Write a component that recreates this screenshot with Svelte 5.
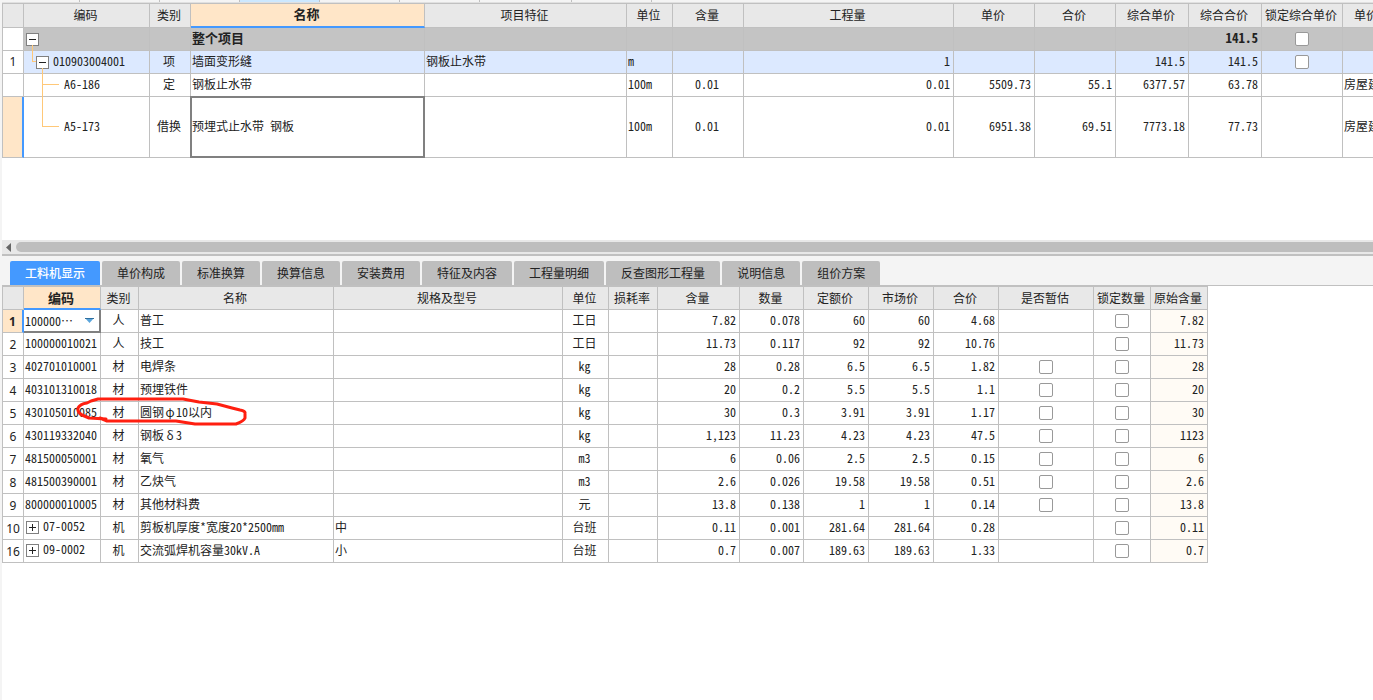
<script lang="ts">
  const topCols = [21, 126, 41, 234, 202, 46, 71, 210, 81, 81, 73, 73, 81, 96];
  const topHeads = ['', '编码', '类别', '名称', '项目特征', '单位', '含量', '工程量', '单价', '合价', '综合单价', '综合合价', '锁定综合单价', '单价'];
  const topRows = [
    { kind: 'group', no: '', code: '', level: 0, type: '', name: '整个项目', feat: '', unit: '', content: '', qty: '', nums: ['', '', '', '141.5'], lock: true, file: '' },
    { kind: 'item', no: '1', code: '010903004001', level: 1, type: '项', name: '墙面变形缝', feat: '钢板止水带', unit: 'm', content: '', qty: '1', nums: ['', '', '141.5', '141.5'], lock: true, file: '' },
    { kind: 'quota', no: '', code: 'A6-186', level: 2, type: '定', name: '钢板止水带', feat: '', unit: '100m', content: '0.01', qty: '0.01', nums: ['5509.73', '55.1', '6377.57', '63.78'], lock: false, file: '房屋建' },
    { kind: 'current', no: '', code: 'A5-173', level: 2, type: '借换', name: '预埋式止水带 钢板', feat: '', unit: '100m', content: '0.01', qty: '0.01', nums: ['6951.38', '69.51', '7773.18', '77.73'], lock: false, file: '房屋建' }
  ];

  const tabs = ['工料机显示', '单价构成', '标准换算', '换算信息', '安装费用', '特征及内容', '工程量明细', '反查图形工程量', '说明信息', '组价方案'];
  let active = $state(0);

  const subCols = [21, 77, 38, 195, 229, 46, 49, 82, 64, 65, 65, 65, 95, 57, 57];
  const subHeads = ['', '编码', '类别', '名称', '规格及型号', '单位', '损耗率', '含量', '数量', '定额价', '市场价', '合价', '是否暂估', '锁定数量', '原始含量'];
  const subRows = [
    { no: '1', code: '100000…', type: '人', name: '普工', spec: '', unit: '工日', nums: ['7.82', '0.078', '60', '60', '4.68'], est: false, orig: '7.82' },
    { no: '2', code: '100000010021', type: '人', name: '技工', spec: '', unit: '工日', nums: ['11.73', '0.117', '92', '92', '10.76'], est: false, orig: '11.73' },
    { no: '3', code: '402701010001', type: '材', name: '电焊条', spec: '', unit: 'kg', nums: ['28', '0.28', '6.5', '6.5', '1.82'], est: true, orig: '28' },
    { no: '4', code: '403101310018', type: '材', name: '预埋铁件', spec: '', unit: 'kg', nums: ['20', '0.2', '5.5', '5.5', '1.1'], est: true, orig: '20' },
    { no: '5', code: '430105010085', type: '材', name: '圆钢φ10以内', spec: '', unit: 'kg', nums: ['30', '0.3', '3.91', '3.91', '1.17'], est: true, orig: '30' },
    { no: '6', code: '430119332040', type: '材', name: '钢板δ3', spec: '', unit: 'kg', nums: ['1,123', '11.23', '4.23', '4.23', '47.5'], est: true, orig: '1123' },
    { no: '7', code: '481500050001', type: '材', name: '氧气', spec: '', unit: 'm3', nums: ['6', '0.06', '2.5', '2.5', '0.15'], est: true, orig: '6' },
    { no: '8', code: '481500390001', type: '材', name: '乙炔气', spec: '', unit: 'm3', nums: ['2.6', '0.026', '19.58', '19.58', '0.51'], est: true, orig: '2.6' },
    { no: '9', code: '800000010005', type: '材', name: '其他材料费', spec: '', unit: '元', nums: ['13.8', '0.138', '1', '1', '0.14'], est: true, orig: '13.8' },
    { no: '10', code: '07-0052', type: '机', name: '剪板机厚度*宽度20*2500mm', spec: '中', unit: '台班', nums: ['0.11', '0.001', '281.64', '281.64', '0.28'], est: false, orig: '0.11' },
    { no: '16', code: '09-0002', type: '机', name: '交流弧焊机容量30kV.A', spec: '小', unit: '台班', nums: ['0.7', '0.007', '189.63', '189.63', '1.33'], est: false, orig: '0.7' }
  ];
  const sum = (list: number[]) => list.reduce((a, b) => a + b, 1);
  // Greek symbols take a full character cell in material names
  const pieces = (s: string) => s.split(/([φδ])/);
</script>

{#snippet toggle(open: boolean)}
  <button class="toggle" aria-label={open ? '−' : '+'}>
    <svg viewBox="0 0 13 13" width="13" height="13" shape-rendering="crispEdges">
      <rect x="0.5" y="0.5" width="12" height="12" fill="#fff" stroke="#808080" />
      <path d={open ? 'M3 6.5H10' : 'M3 6.5H10M6.5 3V10'} stroke="#222" fill="none" />
    </svg>
  </button>
{/snippet}

<div class="app">
  <div class="strip">
    {#each [78, 80, 80, 80, 80, 80, 92, 80] as w, i}
      <span class:lit={i === 3} style="width:{w}px"></span>
    {/each}
  </div>

  <section class="upper">
    <table style="width:{sum(topCols)}px">
      <colgroup>{#each topCols as w}<col style="width:{w}px" />{/each}</colgroup>
      <thead>
        <tr>{#each topHeads as h, i}<th class:picked={i === 3} class:cut={i === 13}>{h}</th>{/each}</tr>
      </thead>
      <tbody>
        {#each topRows as r, i}
          <tr class={r.kind}>
            <td class="no">{r.no}</td>
            <td class="code">
              <div class="tree l{r.level}">
                {#if r.level < 2}{@render toggle(true)}{/if}
                <span>{r.code}</span>
              </div>
              {#if i === 0}
                <svg class="branches" width="40" height="104" shape-rendering="crispEdges">
                  <path d="M8.5 17V33.5H12M18.5 40V98.5H35M18.5 56.5H35" fill="none" stroke="#ffc878" />
                </svg>
              {/if}
            </td>
            <td class="mid">{r.type}</td>
            <td class="name">{r.name}</td>
            <td>{r.feat}</td>
            <td>{r.unit}</td>
            <td class="mid">{r.content}</td>
            <td class="num">{r.qty}</td>
            {#each r.nums as n}<td class="num">{n}</td>{/each}
            <td class="check">{#if r.lock}<input type="checkbox" aria-label="锁定综合单价" />{/if}</td>
            <td>{r.file}</td>
          </tr>
        {/each}
      </tbody>
    </table>
  </section>

  <div class="scroll">
    <svg width="14" height="12" viewBox="0 0 14 12"><path d="M9 2V11L4 6.5Z" fill="#666" /></svg>
    <div class="thumb"></div>
  </div>

  <nav class="tabs">
    {#each tabs as t, i}
      <button class:active={active === i} onclick={() => (active = i)}>{t}</button>
    {/each}
  </nav>

  <section class="lower">
    <table style="width:{sum(subCols)}px">
      <colgroup>{#each subCols as w}<col style="width:{w}px" />{/each}</colgroup>
      <thead>
        <tr>{#each subHeads as h, i}<th class:picked={i === 1}>{h}</th>{/each}</tr>
      </thead>
      <tbody>
        {#each subRows as r, i}
          <tr class:editing={i === 0}>
            <td class="no">{r.no}</td>
            <td class="code">
              {#if i === 0}
                <div class="combo">
                  <select aria-label="编码"><option>{r.code}</option></select>
                  <svg width="9" height="5" viewBox="0 0 9 5"><path d="M0 0H9L4.5 5Z" fill="#5aa5dc" /><path d="M0 0.5H9" stroke="#2f6f9f" /></svg>
                </div>
              {:else if r.type === '机'}
                <div class="tree">{@render toggle(false)}<span>{r.code}</span></div>
              {:else}{r.code}{/if}
            </td>
            <td class="mid">{r.type}</td>
            <td>{#each pieces(r.name) as p, k}{#if k % 2}<span class="greek">{p}</span>{:else}{p}{/if}{/each}</td>
            <td>{r.spec}</td>
            <td class="mid">{r.unit}</td>
            <td></td>
            {#each r.nums as n}<td class="num">{n}</td>{/each}
            <td class="check">{#if r.est}<input type="checkbox" aria-label="是否暂估" />{/if}</td>
            <td class="check"><input type="checkbox" aria-label="锁定数量" /></td>
            <td class="num orig">{r.orig}</td>
          </tr>
        {/each}
      </tbody>
    </table>
    <svg class="mark" width="180" height="34" viewBox="0 0 180 34">
      <path d="M31 23L14 22L7 19Q2 16 3 12Q5 8 12 7L16 5L23 3H108L124 6L142 8L157 12L165 14Q171 15 170 18V22Q169 25 161 28H120L101 25H32L25 22" fill="none" stroke="#ff1f10" stroke-width="3" stroke-linejoin="round" stroke-linecap="round" />
    </svg>
  </section>
</div>

<style>
  :global(body) { background: #fff; }
  .app {
    min-height: 100vh;
    box-sizing: border-box;
    border-left: 2px solid #f4f4f4;
    overflow: hidden;
    color: #222;
    font: 12px/16px "Noto Sans Mono CJK SC", "Noto Sans CJK SC", sans-serif;
  }
  .strip { display: flex; height: 2px; background: #f4f4f4; border-bottom: 1px solid #e0e0e0; }
  .strip span { box-sizing: border-box; border-right: 1px solid #c0c0c0; }
  .strip .lit { background: #cce8ff; }

  .upper { min-height: 237px; overflow: hidden; }
  table { table-layout: fixed; border-collapse: separate; border-spacing: 0; border-left: 1px solid #c0c0c0; border-top: 1px solid #c0c0c0; }
  th, td {
    box-sizing: border-box;
    height: 23px;
    padding: 0 3px 2px 1px;
    border-right: 1px solid #c0c0c0;
    border-bottom: 1px solid #c0c0c0;
    white-space: nowrap;
    overflow: hidden;
    text-align: left;
    vertical-align: middle;
  }
  th { background: #e8e8e8; font-weight: 400; text-align: center; padding: 0 2px 0 0; }
  .upper th { height: 24px; padding-bottom: 2px; }
  th.cut { text-align: left; padding-left: 11px; }
  th.picked { background: #ffe6c8; font-size: 13px; font-weight: 700; border-bottom: 2px solid #4499ff; }
  .mid { text-align: center; }
  .num { text-align: right; }
  .check { padding: 0; }
  .no { text-align: center; padding: 0; font-family: "Noto Sans", sans-serif; }
  .group td:not(.no) { background: #c4c4c4; font-size: 13px; font-weight: 700; }
  .item td:not(.no) { background: #dce9ff; }
  .current td { height: 61px; }
  .current .no { background: #ffe6c8; border-right: 2px solid #4499ff; }
  .current .name { position: relative; overflow: visible; }
  .current .name::after { content: ""; position: absolute; inset: -1px -1px -1px -1px; border: 2px solid #808080; }
  .code { padding: 0 2px 0 2px; }
  .upper .code { position: relative; overflow: visible; }
  .branches { position: absolute; left: 0; top: 0; z-index: 1; }
  .tree { display: flex; align-items: center; gap: 4px; }
  .tree span { padding-bottom: 2px; }
  .l1 { padding-left: 10px; }
  .l2 { padding-left: 38px; }
  .toggle { display: block; width: 13px; height: 13px; padding: 0; border: 0; background: none; }
  .toggle svg { display: block; }
  .greek { display: inline-block; width: 12px; text-align: center; }
  input { appearance: none; display: block; box-sizing: border-box; width: 14px; height: 14px; margin: 0 auto; border: 1px solid #999; border-radius: 2px; background: #fff; }

  .scroll { display: flex; box-sizing: border-box; height: 16px; padding: 2px 0; background: #e8e8e8; border-bottom: 2px solid #c0c0c0; }
  .scroll svg { margin-top: -1px; }
  .thumb { flex: 1; height: 10px; background: #bebebe; border-radius: 5px 0 0 5px; }

  .tabs { display: flex; gap: 2px; padding: 5px 8px 0; background: #f4f4f4; border-bottom: 1px solid #c0c0c0; }
  .tabs button {
    height: 24px;
    padding: 0 15px;
    border: 0;
    border-radius: 2px 2px 0 0;
    background: #bebebe;
    color: #222;
    font: 12px/24px "Noto Sans CJK SC", sans-serif;
  }
  .tabs .active { background: #4499ff; color: #fff; font-weight: 500; }

  .lower { position: relative; }
  .lower .code { padding-bottom: 2px; padding-left: 1px; }
  .lower .tree { padding-left: 1px; }
  .lower .no { padding-top: 1px; }
  .editing .no { background: #ffe6c8; border-right: 2px solid #4499ff; font-weight: 700; }
  .editing .code { padding: 0; border-right: 2px solid #808080; border-bottom: 2px solid #808080; }
  .combo { display: flex; align-items: center; padding: 0 5px 0 1px; }
  .combo select { flex: 1; min-width: 0; appearance: none; padding: 0; border: 0; background: none; color: inherit; font: inherit; }
  .orig { background: #fffbf5; }
  .mark { position: absolute; left: 73px; top: 110px; pointer-events: none; }
</style>
